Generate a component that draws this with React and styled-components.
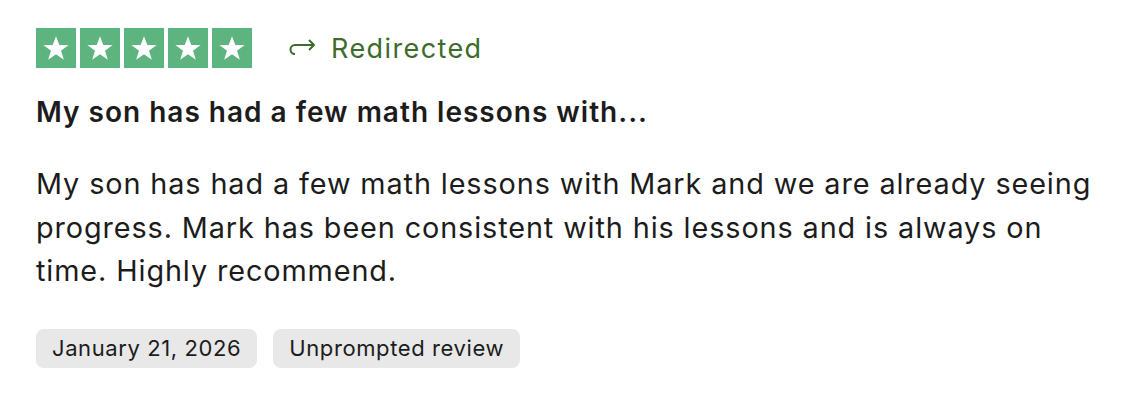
import styled, { createGlobalStyle } from "styled-components";

const GlobalStyle = createGlobalStyle`
  body {
    margin: 0;
    background: #fff;
    font-family: Inter, "Noto Sans", sans-serif;
    color: #1c1c1c;
  }
`;

const Card = styled.article`
  padding: 28px 36px;
  display: flex;
  flex-direction: column;
`;

const TopRow = styled.div`
  display: flex;
  align-items: center;
  gap: 36px;
`;

const Stars = styled.div`
  display: flex;
  gap: 4px;
`;

const StarBox = styled.div`
  width: 40px;
  height: 40px;
  background: #5db47f;
  display: grid;
  place-items: center;
`;

const Redirect = styled.span`
  display: flex;
  align-items: center;
  gap: 14px;
  color: #3d6b2c;
  font-size: 27px;
  letter-spacing: 1.4px;
`;

const Title = styled.h2`
  margin: 24px 0 0;
  font-size: 28px;
  font-weight: 600;
  line-height: 40px;
  letter-spacing: 1px;
`;

const Body = styled.p`
  margin: 30px 0 0;
  font-size: 28.8px;
  line-height: 43.5px;
  letter-spacing: 0.9px;
  max-width: 1075px;
`;

const Tags = styled.div`
  display: flex;
  gap: 16px;
  margin-top: 36px;
`;

const Tag = styled.span`
  background: #e8e8e8;
  border-radius: 8px;
  padding: 0 16px;
  height: 39px;
  display: flex;
  align-items: center;
  font-size: 22px;
  letter-spacing: 0.6px;
`;

const Star = () => (
  <svg width="30" height="30" viewBox="0 0 24 24">
    <path
      fill="#fff"
      d="M12 2.5l2.6 7.1h7.5l-6.1 4.5 2.3 7.2L12 16.9l-6.3 4.4 2.3-7.2L1.9 9.6h7.5z"
    />
  </svg>
);

const Arrow = () => (
  <svg width="29" height="22" viewBox="0 0 29 22" fill="none" stroke="#3d6b2c" strokeWidth="2">
    <path d="M21 3l5 5-5 5" strokeLinejoin="round" />
    <path d="M26 8H7a4.5 4.5 0 0 0 0 9" />
  </svg>
);

export default function App() {
  return (
    <>
      <GlobalStyle />
      <Card>
        <TopRow>
          <Stars>
            {[0, 1, 2, 3, 4].map((i) => (
              <StarBox key={i}>
                <Star />
              </StarBox>
            ))}
          </Stars>
          <Redirect>
            <Arrow />
            Redirected
          </Redirect>
        </TopRow>
        <Title>My son has had a few math lessons with...</Title>
        <Body>
          My son has had a few math lessons with Mark and we are already seeing
          progress. Mark has been consistent with his lessons and is always on
          time. Highly recommend.
        </Body>
        <Tags>
          <Tag>January 21, 2026</Tag>
          <Tag>Unprompted review</Tag>
        </Tags>
      </Card>
    </>
  );
}
